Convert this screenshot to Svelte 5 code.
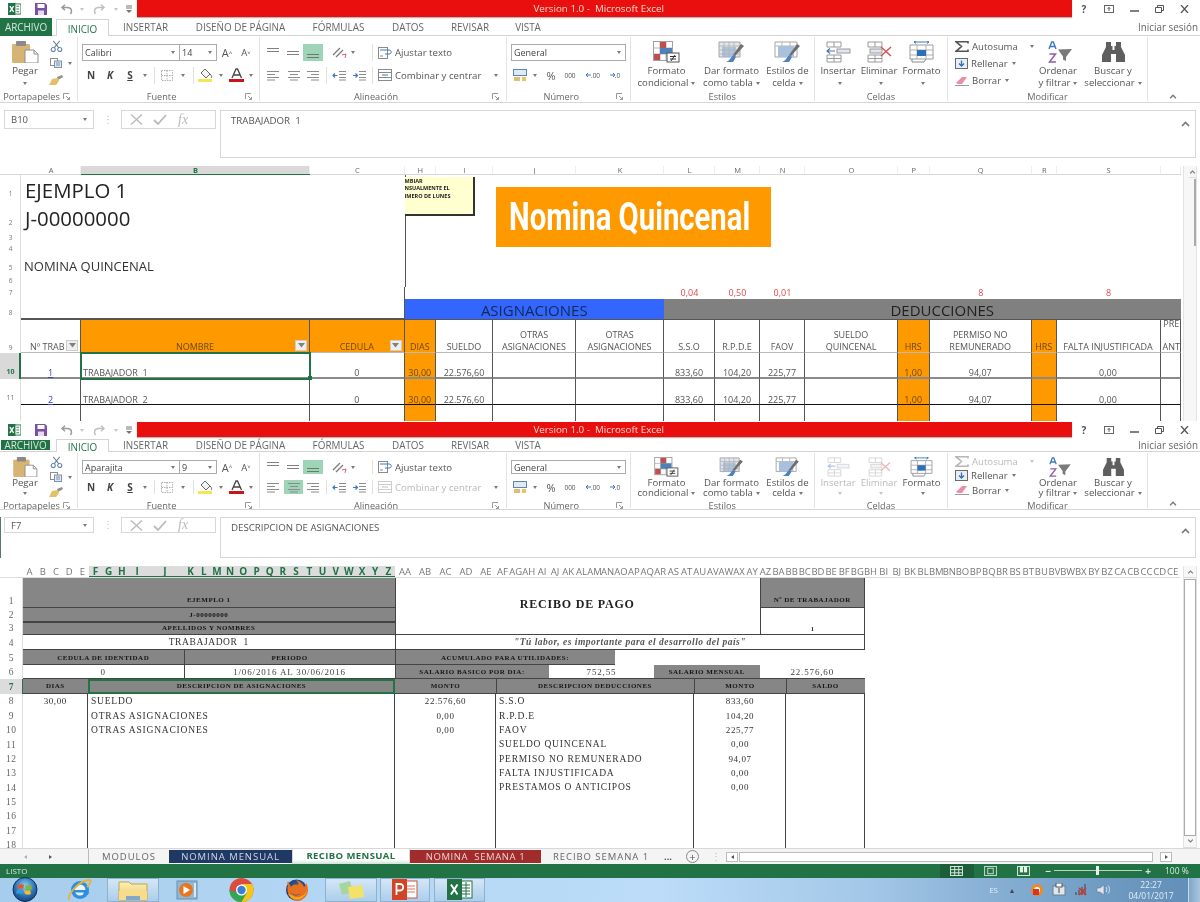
<script>
  const ui = {
    w1: { second: false, font: 'Calibri', size: '14' },
    w2: { second: true, font: 'Aparajita', size: '9' }
  };

  const tabs = [
    ['INSERTAR', 73], ['DISEÑO DE PÁGINA', 117], ['FÓRMULAS', 79],
    ['DATOS', 60], ['REVISAR', 64], ['VISTA', 52]
  ];

  const qat = [
    { w: 28, i: 'xl', iw: 13, ih: 12 }, { w: 26, i: 'save', iw: 12, ih: 12 },
    { w: 24, i: 'undo', iw: 13, ih: 11 }, { w: 8, car: 1, dim: 1 },
    { w: 26, i: 'redo', iw: 13, ih: 11 }, { w: 8, car: 1, dim: 1 },
    { w: 17, i: 'qat', iw: 6, ih: 8 }
  ];

  const fontRow2 = [
    { w: 18, t: 'N', c: 'bold' }, { w: 20, t: 'K', c: 'bold ital' }, { w: 20, t: 'S', c: 'bold und' }, { w: 10, car: 1 },
    { w: 8, sep: 1 }, { w: 18, i: 'border', iw: 12, ih: 11 }, { w: 14, car: 1 }, { w: 6, sep: 1 },
    { w: 20, i: 'bucket', iw: 16, ih: 14 }, { w: 10, car: 1 }, { w: 20, i: 'fcolor', iw: 15, ih: 14 }, { w: 10, car: 1 }
  ];

  const alignRow1 = (r) => [
    { w: 21, i: 'al-top', iw: 14, ih: 12 }, { w: 20, i: 'al-mid', iw: 14, ih: 12 },
    { w: 20, i: 'al-bot', iw: 14, ih: 12, on: 1 }, { w: 6 }, { w: 20, i: 'orient', iw: 15, ih: 13 },
    { w: 8, car: 1 }, { w: 12 }, { w: 6, sep: 1 }, { w: 20, i: 'wrap', iw: 14, ih: 12 },
    { w: 70, t: 'Ajustar texto', c: 'lft' }
  ];
  const alignRow2 = (r) => [
    { w: 22, i: 'al-l', iw: 14, ih: 11 }, { w: 19, i: 'al-c', iw: 14, ih: 11, on: r.second },
    { w: 20, i: 'al-r', iw: 14, ih: 11 }, { w: 6, sep: 1 }, { w: 20, i: 'ind-l', iw: 14, ih: 11 },
    { w: 20, i: 'ind-r', iw: 14, ih: 11 }, { w: 6, sep: 1 }, { w: 20, i: 'merge', iw: 14, ih: 12, dim: r.second },
    { w: 96, t: 'Combinar y centrar', c: 'lft', dim: r.second }, { w: 10, car: 1 }
  ];
  const numRow2 = [
    { w: 18, i: 'money', iw: 14, ih: 12 }, { w: 12, car: 1 }, { w: 20, t: '%', c: 'pct' }, { w: 18, t: '000', c: 'tiny' },
    { w: 4 }, { w: 20, i: 'dec-up', iw: 5, ih: 10, t: '.00', c: 'tiny' }, { w: 2 }, { w: 20, i: 'dec-dn', iw: 5, ih: 10, t: '.0', c: 'tiny' }
  ];

  const styleBtns = [
    { w: 72, i: 'cond', iw: 27, l: ['Formato', 'condicional'], car: 1 },
    { w: 58, i: 'table', iw: 27, l: ['Dar formato', 'como tabla'], car: 1 },
    { w: 54, i: 'cellst', iw: 27, l: ['Estilos de', 'celda'], car: 1 }
  ];
  const cellBtns = (r) => [
    { w: 46, i: 'ins', iw: 25, l: ['Insertar', ''], car: 1, dim: r.second },
    { w: 36, i: 'del', iw: 25, l: ['Eliminar', ''], car: 1, dim: r.second },
    { w: 49, i: 'fmt', iw: 25, l: ['Formato', ''], car: 1 }
  ];
  const sortBtns = [
    { w: 46, i: 'sort', iw: 27, l: ['Ordenar', 'y filtrar'], car: 1 },
    { w: 64, i: 'bino', iw: 25, l: ['Buscar y', 'seleccionar'], car: 1 }
  ];

  // sheet 1
  const cols1 = [
    ['A', 60], ['B', 229], ['C', 94.5], ['H', 31.5], ['I', 57], ['J', 83], ['K', 88], ['L', 51],
    ['M', 45], ['N', 45], ['O', 93], ['P', 31.5], ['Q', 102.5], ['R', 24.5], ['S', 104], ['', 20]
  ];
  const grid1 = '21px ' + cols1.map((c) => c[1] + 'px').join(' ');
  const heads = {
    A: 'Nº TRAB', B: 'NOMBRE', C: 'CEDULA', H: 'DIAS', I: 'SUELDO', J: 'OTRAS\nASIGNACIONES', K: 'OTRAS\nASIGNACIONES',
    L: 'S.S.O', M: 'R.P.D.E', N: 'FAOV', O: 'SUELDO\nQUINCENAL', P: 'HRS', Q: 'PERMISO NO\nREMUNERADO', R: 'HRS', S: 'FALTA INJUSTIFICADA', '': ''
  };
  const orangeHead = 'BCHPR', orangeBody = 'HPR';
  const filtered = 'ABC';
  const body1 = (n) => ({
    A: String(n), B: 'TRABAJADOR  ' + n, C: '0', H: '30,00', I: '22.576,60', L: '833,60', M: '104,20',
    N: '225,77', P: '1,00', Q: '94,07', S: '0,00'
  });
  const rates = { L: '0,04', M: '0,50', N: '0,01', Q: '8', S: '8' };
  const topRows = [[25, 1], [29, 2], [15, 3], [11, 4], [19, 5], [13, 6]];

  // sheet 2
  const letters = 'A B C D E F G H I J K L M N O P Q R S T U V W X Y Z AA AB AC AD AE'.split(' ');
  const hw = { I: 17.5, J: 38, AA: 20, AB: 20, AC: 21, AD: 20, AE: 20 };
  const more = 'AF AG AH AI AJ AK AL AM AN AO AP AQ AR AS AT AU AV AW AX AY AZ BA BB BC BD BE BF BG BH BI BJ BK BL BM BN BO BP BQ BR BS BT BU BV BW BX BY BZ CA CB CC CD CE'.split(' ');
  const cols2 = [
    ...letters.map((l, i) => ({ l, w: hw[l] || 13.2, sel: i >= 5 && i <= 25 })),
    ...more.map((l) => ({ l, w: 13.15, sel: false }))
  ];

  const g = 'hd', v = 'val';
  const cells2 = [
    { r: 1, c: 2, n: 3, t: 'EJEMPLO 1', k: g + ' end' },
    { r: 1, c: 5, n: 6, h: 3, t: 'RECIBO DE PAGO', k: 'title' },
    { r: 1, c: 11, n: 2, t: 'Nº DE TRABAJADOR', k: g + ' end ln' },
    { r: 2, c: 2, n: 3, t: 'J-00000000', k: g },
    { r: 2, c: 11, n: 2, h: 2, t: '1', k: 'one ln' },
    { r: 3, c: 2, n: 3, t: 'APELLIDOS Y NOMBRES', k: g + ' tl' },
    { r: 4, c: 2, n: 3, t: 'TRABAJADOR  1', k: 'name' },
    { r: 4, c: 5, n: 8, t: '"Tú labor, es importante para el desarrollo del país"', k: 'quote' },
    { r: 5, c: 2, n: 2, t: 'CEDULA DE IDENTIDAD', k: g },
    { r: 5, c: 4, n: 1, t: 'PERIODO', k: g + ' ll' },
    { r: 5, c: 5, n: 3, t: 'ACUMULADO PARA UTILIDADES:', k: g + ' ll' },
    { r: 6, c: 2, n: 2, t: '0', k: v },
    { r: 6, c: 4, n: 1, t: '1/06/2016 AL 30/06/2016', k: v + ' ll' },
    { r: 6, c: 5, n: 2, t: 'SALARIO BASICO POR DIA:', k: g + ' ll' },
    { r: 6, c: 7, n: 2, t: '752,55', k: v },
    { r: 6, c: 9, n: 2, t: 'SALARIO MENSUAL', k: g },
    { r: 6, c: 11, n: 2, t: '22.576,60', k: v },
    { r: 7, c: 2, n: 1, t: 'DIAS', k: g },
    { r: 7, c: 3, n: 2, t: 'DESCRIPCION DE ASIGNACIONES', k: g + ' picked' },
    { r: 7, c: 5, n: 1, t: 'MONTO', k: g },
    { r: 7, c: 6, n: 4, t: 'DESCRIPCION DEDUCCIONES', k: g + ' ll' },
    { r: 7, c: 10, n: 2, t: 'MONTO', k: g + ' ll' },
    { r: 7, c: 12, n: 1, t: 'SALDO', k: g + ' ll' }
  ];
  const lines2 = [
    ['30,00', 'SUELDO', '22.576,60', 'S.S.O', '833,60'],
    ['', 'OTRAS ASIGNACIONES', '0,00', 'R.P.D.E', '104,20'],
    ['', 'OTRAS ASIGNACIONES', '0,00', 'FAOV', '225,77'],
    ['', '', '', 'SUELDO QUINCENAL', '0,00'],
    ['', '', '', 'PERMISO NO REMUNERADO', '94,07'],
    ['', '', '', 'FALTA INJUSTIFICADA', '0,00'],
    ['', '', '', 'PRESTAMOS O ANTICIPOS', '0,00'],
    ['', '', '', '', ''], ['', '', '', '', ''], ['', '', '', '', ''], ['', '', '', '', '']
  ];
  const rowLabels2 = Array.from({ length: 18 }, (_, i) => i + 1);

  const sheetTabs = [
    { t: 'MODULOS', w: 80, k: 'plain' }, { t: 'NOMINA MENSUAL', w: 123, k: 'navy' },
    { t: 'RECIBO MENSUAL', w: 118, k: 'active' }, { t: 'NOMINA  SEMANA 1', w: 131, k: 'red' },
    { t: 'RECIBO SEMANA 1', w: 120, k: 'plain' }
  ];

  const taskApps = [
    { w: 42, gap: 21, i: 'orb', iw: 30, ih: 25 }, { w: 25, gap: 15, i: 'ie', iw: 25, ih: 24 },
    { w: 52, gap: 17, i: 'folder', iw: 30, ih: 22, b: 1 }, { w: 23, gap: 30, i: 'media', iw: 23, ih: 20 },
    { w: 25, gap: 30, i: 'chrome', iw: 25, ih: 24 }, { w: 25, gap: 16, i: 'fox', iw: 25, ih: 24 },
    { w: 52, gap: 3, i: 'sticky', iw: 28, ih: 20, b: 1 }, { w: 50, gap: 4, i: 'ppt', iw: 26, ih: 21, b: 1 },
    { w: 51, gap: 0, i: 'xlbig', iw: 26, ih: 21, b: 1 }
  ];
</script>

{#snippet ic(name, w, h)}
  <svg class="ic" width={w} height={h}><use href="#{name}" /></svg>
{/snippet}

{#snippet tools(items)}
  {#each items as t}
    <span class="slot" class:on={t.on} class:dim={t.dim} style:width="{t.w}px">
      {#if t.i}{@render ic(t.i, t.iw, t.ih)}{/if}
      {#if t.car}<i class="caret"></i>{/if}
      {#if t.sep}<i class="vsep"></i>{/if}
      {#if t.t}<span class={t.c}>{t.t}</span>{/if}
    </span>
  {/each}
{/snippet}

{#snippet big(items)}
  {#each items as b}
    <div class="big" class:dim={b.dim} style:width="{b.w}px">
      <div class="bigic">{@render ic(b.i, b.iw, 22)}</div>
      <div class="bl">{b.l[0]}</div>
      <div class="bl">{b.l[1]}{#if b.car}<i class="caret sp"></i>{/if}</div>
    </div>
  {/each}
{/snippet}

{#snippet label(t, launch)}
  <div class="glabel">
    <span>{t}</span>
    {#if launch}<span class="launch">{@render ic('launch', 7, 7)}</span>{/if}
  </div>
{/snippet}

{#snippet chrome(r)}
  <div class="titlebar">
    <div class="qat">{@render tools(qat)}</div>
    <div class="redbar"><span>Version 1.0 -  Microsoft Excel</span></div>
    <div class="winbtns">
      <span>?</span>
      <span>{@render ic('w-help', 10, 8)}</span>
      <span>{@render ic('w-min', 9, 8)}</span>
      <span>{@render ic('w-max', 9, 8)}</span>
      <span>{@render ic('w-x', 9, 8)}</span>
    </div>
  </div>
  <div class="tabrow">
    <div class="filetab"><span>ARCHIVO</span></div>
    <div class="hometab">INICIO</div>
    {#each tabs as t}
      <div class="tab" style:width="{t[1]}px">{t[0]}</div>
    {/each}
    <div class="signin">Iniciar sesión</div>
  </div>
  <div class="ribbon">
    <div class="group" style:width="78px">
      <div class="gbody clip">
        <div class="big paste">
          <div class="bigic">{@render ic('paste', 27, 22)}</div>
          <div class="bl">Pegar</div>
          <div class="bl"><i class="caret"></i></div>
        </div>
        <div class="stack">
          <span class="slot s16">{@render ic('cut', 13, 12)}</span>
          <span class="slot s16">{@render ic('copy', 12, 10)}<i class="caret out"></i></span>
          <span class="slot s16">{@render ic('brush', 14, 10)}</span>
        </div>
      </div>
      {@render label('Portapapeles', true)}
    </div>

    <div class="group" style:width="182px">
      <div class="gbody rows pad4">
        <div class="line">
          <span class="select fname">{r.font}<i class="caret"></i></span>
          <span class="select fsize">{r.size}<i class="caret"></i></span>
          <span class="slot fgrow" >A<sup>˄</sup></span>
          <span class="slot fshrink">A<sup>˅</sup></span>
        </div>
        <div class="line">{@render tools(fontRow2)}</div>
      </div>
      {@render label('Fuente', true)}
    </div>

    <div class="group" style:width="247px">
      <div class="gbody rows pad2">
        <div class="line">{@render tools(alignRow1(r))}</div>
        <div class="line">{@render tools(alignRow2(r))}</div>
      </div>
      {@render label('Alineación', true)}
    </div>

    <div class="group" style:width="123.5px">
      <div class="gbody rows pad4">
        <div class="line"><span class="select fnum">General<i class="caret"></i></span></div>
        <div class="line">{@render tools(numRow2)}</div>
      </div>
      {@render label('Número', true)}
    </div>

    <div class="group" style:width="184.5px">
      <div class="gbody">{@render big(styleBtns)}</div>
      {@render label('Estilos', false)}
    </div>

    <div class="group" style:width="133px">
      <div class="gbody">{@render big(cellBtns(r))}</div>
      {@render label('Celdas', false)}
    </div>

    <div class="group" style:width="200px">
      <div class="gbody">
        <div class="mod">
          <div class="modrow" class:dim={r.second}>{@render ic('sigma', 14, 11)}<span>Autosuma</span><i class="caret far"></i></div>
          <div class="modrow">{@render ic('filld', 13, 11)}<span>Rellenar</span><i class="caret"></i></div>
          <div class="modrow">{@render ic('eraser', 14, 10)}<span>Borrar</span><i class="caret"></i></div>
        </div>
        {@render big(sortBtns)}
      </div>
      {@render label('Modificar', false)}
    </div>
    <div class="collapse">{@render ic('up', 8, 5)}</div>
  </div>
{/snippet}

{#snippet formula(name, text)}
  <div class="fbar">
    <div class="namebox"><span>{name}</span><i class="caret"></i></div>
    <div class="dots">⋮</div>
    <div class="fxbox">
      {@render ic('f-x', 13, 11)}
      {@render ic('f-ok', 14, 11)}
      <em>fx</em>
    </div>
    <div class="input"><span>{text}</span>{@render ic('up', 9, 6)}</div>
  </div>
{/snippet}

<svg class="defs" aria-hidden="true">
  <defs>
    <radialGradient id="orbg" cx=".5" cy=".35" r=".7"><stop offset="0" stop-color="#8fd0f5" /><stop offset=".6" stop-color="#2a6fb3" /><stop offset="1" stop-color="#123a6b" /></radialGradient>
    <linearGradient id="foldg" x1="0" y1="0" x2="0" y2="1"><stop offset="0" stop-color="#fdf1b4" /><stop offset="1" stop-color="#e8c667" /></linearGradient>
    <radialGradient id="foxg" cx=".55" cy=".45" r=".6"><stop offset="0" stop-color="#3d6fb5" /><stop offset=".55" stop-color="#28508f" /><stop offset="1" stop-color="#1b3566" /></radialGradient>
  </defs>
  <symbol id="xl" viewBox="0 0 14 13"><rect x="6" y="1" width="8" height="11" fill="#fff" stroke="#217346" /><path d="M9 3.500h3M9 6.500h3M9 9.500h3" stroke="#217346" /><rect x="0" y="0" width="8" height="13" fill="#217346" /><path d="M2 3.500l4 6M6 3.500l-4 6" stroke="#fff" stroke-width="1.400" /></symbol>
  <symbol id="save" viewBox="0 0 12 12"><path d="M0 0h10l2 2v10H0z" fill="#7b4fa3" /><rect x="2.500" y="1" width="7" height="4" fill="#fff" /><rect x="3" y="7.500" width="6" height="4.500" fill="#e6dcef" /></symbol>
  <symbol id="undo" viewBox="0 0 13 11"><path d="M10.500 10c2-3 1-6.500-3-6.500H2M5 .8L2 3.500l3 2.700" fill="none" stroke="#9a9a9a" stroke-width="1.500" /></symbol>
  <symbol id="redo" viewBox="0 0 13 11"><path d="M2.500 10c-2-3-1-6.500 3-6.500H11M8 .8l3 2.700-3 2.700" fill="none" stroke="#c0c0c0" stroke-width="1.500" /></symbol>
  <symbol id="qat" viewBox="0 0 6 8"><path d="M0 1h6M0 3h6" stroke="#777" /><path d="M0 5h6L3 8z" fill="#777" /></symbol>
  <symbol id="paste" viewBox="0 0 27 22"><rect x="0" y="3" width="18" height="19" rx="1" fill="#d7b374" /><rect x="4" y="0" width="10" height="5" rx="1" fill="#8a8a8a" /><path d="M13 9h9l4 4v9H13z" fill="#fff" stroke="#8f8f8f" /><path d="M22 9v4h4" fill="none" stroke="#8f8f8f" /></symbol>
  <symbol id="cut" viewBox="0 0 13 13"><path d="M3 1l6 7.500M10 1L4 8.500" stroke="#6f7f8f" stroke-width="1.100" /><circle cx="3" cy="10.300" r="2.200" fill="none" stroke="#5f86b0" stroke-width="1.200" /><circle cx="10" cy="10.300" r="2.200" fill="none" stroke="#5f86b0" stroke-width="1.200" /></symbol>
  <symbol id="copy" viewBox="0 0 12 10"><rect x=".5" y=".5" width="7" height="7" fill="#fff" stroke="#8d8d8d" /><rect x="4.500" y="3" width="7" height="6.500" fill="#dbe7f3" stroke="#7f93a8" /><path d="M6 5h4M6 7h4" stroke="#7f93a8" /></symbol>
  <symbol id="brush" viewBox="0 0 14 10"><path d="M8 2l5-2 1 2-5 3z" fill="#8d8d8d" /><path d="M3 4l6-1 1 3-3 4H0z" fill="#e2c068" /></symbol>
  <symbol id="border" viewBox="0 0 12 11"><rect x=".5" y=".5" width="11" height="10" fill="none" stroke="#b0b0b0" stroke-dasharray="1.500 1" /><path d="M6 .5v10M.5 5.500h11" stroke="#b0b0b0" stroke-dasharray="1.500 1" /></symbol>
  <symbol id="bucket" viewBox="0 0 16 14"><path d="M7 1l5 5-4 4-5-5z" fill="#f3f3f3" stroke="#666" /><path d="M12 6c2 2 2 3 1 4" fill="none" stroke="#666" /><rect x="0" y="11" width="14" height="3" fill="#f5e653" /></symbol>
  <symbol id="fcolor" viewBox="0 0 15 14"><path d="M3 10L7 1h1.500l4 9M4.700 7h6" fill="none" stroke="#444" stroke-width="1.300" /><rect x="0" y="11" width="15" height="3" fill="#c8151b" /></symbol>
  <symbol id="al-top" viewBox="0 0 14 12"><path d="M1 1.500h12M1 4.500h12" stroke="#808080" /></symbol>
  <symbol id="al-mid" viewBox="0 0 14 12"><path d="M1 4.500h12M1 7.500h12" stroke="#808080" /></symbol>
  <symbol id="al-bot" viewBox="0 0 14 12"><path d="M1 7.500h12M1 10.500h12" stroke="#6a7a70" /></symbol>
  <symbol id="al-l" viewBox="0 0 14 11"><path d="M1 1.500h12M1 4.500h8M1 7.500h12M1 10h8" stroke="#8c8c8c" /></symbol>
  <symbol id="al-c" viewBox="0 0 14 11"><path d="M1 1.500h12M3 4.500h8M1 7.500h12M3 10h8" stroke="#8c8c8c" /></symbol>
  <symbol id="al-r" viewBox="0 0 14 11"><path d="M1 1.500h12M5 4.500h8M1 7.500h12M5 10h8" stroke="#8c8c8c" /></symbol>
  <symbol id="ind-l" viewBox="0 0 14 11"><path d="M7 1.500h7M7 4.500h7M7 7.500h7M7 10h7" stroke="#8c8c8c" /><path d="M5.500 5.500H1M3 3.500l-2 2 2 2" fill="none" stroke="#3c78c0" stroke-width="1.200" /></symbol>
  <symbol id="ind-r" viewBox="0 0 14 11"><path d="M7 1.500h7M7 4.500h7M7 7.500h7M7 10h7" stroke="#8c8c8c" /><path d="M1 5.500h4.500M3.500 3.500l2 2-2 2" fill="none" stroke="#3c78c0" stroke-width="1.200" /></symbol>
  <symbol id="orient" viewBox="0 0 15 13"><path d="M1 9l7-7M4 11l7-7" stroke="#7a7a7a" stroke-width="1.300" /><path d="M10 9l4-1-1 4" fill="none" stroke="#c86a78" /></symbol>
  <symbol id="wrap" viewBox="0 0 14 12"><rect x=".5" y=".5" width="9" height="11" fill="#fff" stroke="#8a8a8a" /><path d="M2 3h9c3 0 3 4 0 4H7" fill="none" stroke="#3c78c0" /><path d="M2 9h3" stroke="#8a8a8a" /></symbol>
  <symbol id="merge" viewBox="0 0 14 12"><rect x=".5" y=".5" width="13" height="11" fill="#fff" stroke="#8a8a8a" /><path d="M.5 3.500h13M.5 8.500h13" stroke="#8a8a8a" /><path d="M4 6h6" stroke="#3c78c0" /></symbol>
  <symbol id="money" viewBox="0 0 14 12"><rect x=".5" y=".5" width="13" height="6" fill="#dfeaf5" stroke="#5f86b0" /><path d="M1 9h6M1 11h6" stroke="#d7a94b" stroke-width="1.500" /><path d="M9 8h4v4H9z" fill="#e8c75f" /></symbol>
  <symbol id="dec-up" viewBox="0 0 5 10"><path d="M5 5H0M2 3L0 5l2 2" fill="none" stroke="#3c78c0" /></symbol>
  <symbol id="dec-dn" viewBox="0 0 5 10"><path d="M0 5h5M3 3l2 2-2 2" fill="none" stroke="#3c78c0" /></symbol>
  <symbol id="cond" viewBox="0 0 27 22"><rect x=".5" y=".5" width="19" height="19" fill="#fff" stroke="#a0a0a0" /><path d="M7 .5v19M13 .5v19M.5 7h19M.5 13h19" stroke="#b5b5b5" /><rect x="7" y="1" width="6" height="6" fill="#c0504d" /><rect x="7" y="7" width="12" height="6" fill="#4f81bd" /><rect x="1" y="13" width="6" height="6" fill="#c0504d" /><rect x="14" y="12" width="12" height="9" fill="#fff" stroke="#555" /><path d="M17 15.500h6M17 18h6M22 14l-4 6" stroke="#333" fill="none" /></symbol>
  <symbol id="table" viewBox="0 0 27 22"><path d="M1 1h21v15H1z" fill="#dfe7f0" stroke="#a5a5a5" /><path d="M1 5h21M1 9h21M1 13h21M6 1v15M11 1v15M16 1v15" stroke="#b7b7b7" /><path d="M4 6h14v10H4z" fill="#9fb3cc" opacity=".7" /><path d="M26 5L17 15l-2-1 8-11z" fill="#6e6e6e" /><path d="M15 14l3 2-3 5H8c3-1 5-4 7-7z" fill="#4f81bd" /></symbol>
  <symbol id="cellst" viewBox="0 0 27 22"><path d="M1 1h22v15H1z" fill="#fff" stroke="#a5a5a5" /><path d="M1 5h22M8 1v15M16 1v15" stroke="#b7b7b7" /><path d="M4 5h16v11H4z" fill="#a9c1de" /><path d="M26 5L17 15l-2-1 8-11z" fill="#6e6e6e" /><path d="M15 14l3 2-3 5H8c3-1 5-4 7-7z" fill="#4f81bd" /></symbol>
  <symbol id="ins" viewBox="0 0 25 22"><path d="M1 1h14v5H1zM8 1v5M1 14h14v7H1zM8 14v7M1 17.500h14" fill="#fff" stroke="#9a9a9a" /><path d="M9 10H1M4 7.500L1 10l3 2.500" fill="none" stroke="#3c78c0" stroke-width="1.200" /><rect x="11" y="8" width="13" height="4" fill="#dfe7f0" stroke="#9a9a9a" /></symbol>
  <symbol id="del" viewBox="0 0 25 22"><path d="M1 1h14v5H1zM8 1v5M1 14h14v7H1zM8 14v7M1 17.500h14" fill="#fff" stroke="#9a9a9a" /><rect x="3" y="8" width="12" height="4" fill="#dfe7f0" stroke="#9a9a9a" /><path d="M14 6l10 9M24 6L14 15" stroke="#d9534f" stroke-width="1.500" /></symbol>
  <symbol id="fmt" viewBox="0 0 25 22"><path d="M1 4h23v14H1z" fill="#fff" stroke="#9a9a9a" /><path d="M8 4v14M17 4v14M1 9h23M1 14h23" stroke="#b0b0b0" /><rect x="8" y="9" width="9" height="6" fill="#2f6fb5" /><path d="M5 1h15M5 1l2-1M5 1l2 1.500M20 1l-2-1M20 1l-2 1.500" stroke="#3c78c0" fill="none" /><path d="M3 18v3h12l2-3" fill="none" stroke="#888" /></symbol>
  <symbol id="sigma" viewBox="0 0 14 11"><path d="M13 2.500V.7H1l5.500 4.800L1 10.300h12V8.500" fill="none" stroke="#555" stroke-width="1.600" /></symbol>
  <symbol id="filld" viewBox="0 0 13 11"><rect x=".5" y=".5" width="12" height="10" fill="#e9eef5" stroke="#6a6a6a" /><path d="M6.500 2.500v5M4 5.500l2.500 2.500L9 5.500" fill="none" stroke="#2f6fb5" stroke-width="1.300" /></symbol>
  <symbol id="eraser" viewBox="0 0 14 10"><path d="M1 7l6-6h5L7 8H3z" fill="#e88fa4" /><path d="M0 9.500h14" stroke="#999" /></symbol>
  <symbol id="sort" viewBox="0 0 27 22"><path d="M13 8.500l14-.5-6 8v4l-3-1.500v-3z" fill="#7a7a7a" /><path d="M4 8l2.700-7h1.600L11 8M5.200 5.500H10" fill="none" stroke="#3c78c0" stroke-width="1.400" /><path d="M4.500 13h6l-6 8h6.500" fill="none" stroke="#8e5fa8" stroke-width="1.500" /></symbol>
  <symbol id="bino" viewBox="0 0 25 22"><path d="M5 1h5v4h1.500v4h2V5H15V1h5v5l2 4 2 4v7h-9v-8h-5v8H1v-7l2-4 2-4z" fill="#5e5e5e" /></symbol>
  <symbol id="launch" viewBox="0 0 7 7"><path d="M.5 6V.5H6M3 3l3.500 3.500M4 6.500h2.500V4" fill="none" stroke="#999" /></symbol>
  <symbol id="up" viewBox="0 0 9 6"><path d="M1 5l3.500-3.500L8 5" fill="none" stroke="#777" stroke-width="1.600" /></symbol>
  <symbol id="w-help" viewBox="0 0 10 8"><rect x=".5" y=".5" width="9" height="7" fill="none" stroke="#666" /><path d="M5 2v4M3.500 4L5 2.500 6.500 4" fill="none" stroke="#666" /></symbol>
  <symbol id="w-min" viewBox="0 0 9 8"><path d="M0 6h9" stroke="#555" stroke-width="1.500" /></symbol>
  <symbol id="w-max" viewBox="0 0 9 8"><path d="M.5 2.500h6v5h-6zM2.500 2.500v-2h6v5H6.500" fill="none" stroke="#555" /></symbol>
  <symbol id="w-x" viewBox="0 0 9 8"><path d="M1 0l7 8M8 0L1 8" stroke="#555" stroke-width="1.300" /></symbol>
  <symbol id="f-x" viewBox="0 0 13 11"><path d="M1 .5l11 10M12 .5l-11 10" stroke="#bbb" stroke-width="1.400" /></symbol>
  <symbol id="f-ok" viewBox="0 0 14 11"><path d="M1 6l4 4 8-9" fill="none" stroke="#bbb" stroke-width="1.800" /></symbol>
  <symbol id="funnel" viewBox="0 0 7 5"><path d="M0 0h7L3.500 4.500z" fill="#808080" /></symbol>
  <symbol id="orb" viewBox="0 0 30 25"><circle cx="15" cy="12.500" r="12" fill="url(#orbg)" stroke="#0f3059" /><path d="M8 8c2-1 4-1 6 0l-1 4c-2-1-4-1-6 0z" fill="#e8562a" /><path d="M15 8c2 1 4 1 6 0l1 4c-2 1-4 1-6 0z" fill="#7fba2c" /><path d="M7 13c2-1 4-1 6 0l-1 4c-2-1-4-1-6 0z" fill="#2e9fdc" /><path d="M14 13c2 1 4 1 6 0l1 4c-2 1-4 1-6 0z" fill="#f4bd2a" /></symbol>
  <symbol id="ie" viewBox="0 0 25 24"><circle cx="13" cy="12" r="9" fill="#2f8fdc" /><circle cx="13" cy="12" r="5.500" fill="#e9f4fb" /><path d="M6 12h14v2.500H6z" fill="#2f8fdc" /><path d="M17 14l5 0-1 3h-5z" fill="#2f8fdc" /><path d="M2 22C0 17 12 2 23 2c2 1-1 5-3 7" fill="none" stroke="#e7b23c" stroke-width="1.800" /></symbol>
  <symbol id="folder" viewBox="0 0 30 22"><path d="M1 3h10l2 2h16v16H1z" fill="url(#foldg)" stroke="#c4a24e" /><path d="M1 12h28v9H1z" fill="#f6dc8b" /><path d="M8 17h14v4H8z" fill="#7fa8c9" /></symbol>
  <symbol id="media" viewBox="0 0 23 20"><rect x="1" y="1" width="20" height="18" fill="#8fb7d6" stroke="#6b8fae" /><circle cx="10" cy="10" r="7" fill="#e8761f" /><path d="M7.500 6l6.500 4-6.500 4z" fill="#fff" /><rect x="18" y="3" width="2" height="14" fill="#dceaf5" /></symbol>
  <symbol id="chrome" viewBox="0 0 25 24"><circle cx="12.500" cy="12" r="12" fill="#dd4b3e" /><path d="M12.500 24a12 12 0 0 0 10.400-18H12.500z" fill="#f5c518" /><path d="M.5 12A12 12 0 0 0 12.500 24l5.500-9.500H8z" fill="#2fa84f" /><circle cx="12.500" cy="12" r="5.500" fill="#fff" /><circle cx="12.500" cy="12" r="4.200" fill="#3b7fd9" /></symbol>
  <symbol id="fox" viewBox="0 0 25 24"><circle cx="12.500" cy="12" r="10.500" fill="url(#foxg)" /><path d="M4 3c-1 2-1 3 0 4C2 13 5 22 13 23c6 0 11-5 11-11 0-3-1-6-2-7 0 2-1 3-2 4-1-3-4-6-8-7 2 2 3 4 2 5-3-1-6 0-7 2z M6 13c2 4 7 5 11 2-3 4-9 3-11-2z" fill="#e8711f" /><path d="M4 16c3 5 9 7 14 4 3-2 5-5 5-8-2 6-9 9-14 6-2-1-4-2-5-2z" fill="#f5a623" /></symbol>
  <symbol id="sticky" viewBox="0 0 28 20"><path d="M2 4l11-3 3 11-11 3z" fill="#a6d5a0" /><path d="M11 7l14-2 2 12-14 2z" fill="#f4e266" /></symbol>
  <symbol id="ppt" viewBox="0 0 26 21"><rect x="12" y="2" width="13" height="17" fill="#fff" stroke="#c8553a" /><path d="M15 7h8M15 10h8M15 13h8" stroke="#d9765f" /><rect x="0" y="0" width="15" height="21" fill="#d14424" /><path d="M4.500 16V5H8a3 3 0 0 1 0 6.500H4.500" fill="none" stroke="#fff" stroke-width="1.800" /></symbol>
  <symbol id="xlbig" viewBox="0 0 26 21"><rect x="12" y="2" width="13" height="17" fill="#fff" stroke="#217346" /><path d="M15 6h8M15 9h8M15 12h8M15 15h8M19 3v15" stroke="#217346" /><rect x="0" y="0" width="15" height="21" fill="#217346" /><path d="M4 5.500l6.500 10M10.500 5.500L4 15.500" stroke="#fff" stroke-width="2" /></symbol>
  <symbol id="v-norm" viewBox="0 0 14 11"><rect x=".5" y=".5" width="13" height="10" fill="none" stroke="#e8f2ec" /><path d="M5 .5v10M9.500 .5v10M.5 4h13M.5 7.500h13" stroke="#e8f2ec" /></symbol>
  <symbol id="v-page" viewBox="0 0 14 11"><rect x=".5" y=".5" width="13" height="10" fill="none" stroke="#cfe2d7" /><rect x="4" y="2.500" width="6" height="6" fill="none" stroke="#cfe2d7" /></symbol>
  <symbol id="v-brk" viewBox="0 0 14 11"><rect x=".5" y=".5" width="13" height="10" fill="none" stroke="#e8f2ec" /><rect x="3" y="0" width="3.500" height="7" fill="#e8f2ec" /><rect x="7.500" y="0" width="3.500" height="7" fill="#e8f2ec" /></symbol>
  <symbol id="tr-a" viewBox="0 0 14 13"><circle cx="7" cy="7" r="6" fill="#ef8a1d" /><circle cx="7" cy="7" r="3" fill="#fff" /><rect x="3" y="6" width="6" height="6" fill="#d8332a" /></symbol>
  <symbol id="tr-b" viewBox="0 0 14 13"><rect x="1" y="3" width="12" height="9" fill="#dfe7ef" stroke="#6e7f8f" /><rect x="4" y="0" width="6" height="4" fill="#fff" stroke="#555" /><path d="M7 5v5" stroke="#445" /></symbol>
  <symbol id="tr-c" viewBox="0 0 14 13"><path d="M1 12h2V9H1zM4 12h2V7H4zM7 12h2V4H7zM10 12h2V1h-2z" fill="#5f6f7f" /><path d="M5 5l7 7M12 5l-7 7" stroke="#d8332a" stroke-width="1.600" /></symbol>
  <symbol id="tr-d" viewBox="0 0 14 13"><path d="M1 5h3l4-3v10L4 9H1z" fill="#dde5ee" stroke="#6b7b8b" stroke-width=".6" /><path d="M10 4c1 1 1 4 0 5M12 2.500c2 2 2 6 0 8" fill="none" stroke="#dde5ee" /></symbol>
</svg>

<div class="page">
  <section class="win w1">
    {@render chrome(ui.w1)}
    {@render formula('B10', 'TRABAJADOR  1')}

    <div class="sheetwrap">
      <div class="s1" style:grid-template-columns={grid1}>
        <div class="corner"></div>
        {#each cols1 as c}
          <div class="ch" class:sel={c[0] === 'B'}>{c[0]}</div>
        {/each}

        {#each topRows as tr}
          <div class="rh" style:grid-row={tr[1] + 1}>{tr[1]}</div>
        {/each}
        <div class="big1 a1">EJEMPLO 1</div>
        <div class="big1 a2">J-00000000</div>
        <div class="a3"></div>
        <div class="a4"></div>
        <div class="nq">NOMINA QUINCENAL</div>
        <div class="a6"></div>
        <div class="canvas">
          <div class="note"><p>MBIAR</p><p>NSUALMENTE EL</p><p>IMERO DE LUNES</p></div>
          <div class="banner"><span>Nomina Quincenal</span></div>
        </div>

        <div class="rh r7">7</div>
        {#each cols1 as c}
          <div class="rate" class:free={c[0] === 'C'}>{rates[c[0]] || ''}</div>
        {/each}

        <div class="rh r8">8</div>
        <div class="blank8"></div>
        <div class="asig">ASIGNACIONES</div>
        <div class="dedu">DEDUCCIONES</div>

        <div class="rh r9">9</div>
        {#each cols1 as c}
          <div class="hc" class:orange={orangeHead.includes(c[0]) && c[0]} class:wide={c[0] === 'A'}>
            {#if c[0]}
              <span class="pre">{heads[c[0]]}</span>
            {:else}
              <span class="pre cutoff">PRE{'\n\n'}ANT</span>
            {/if}
            {#if c[0] && filtered.includes(c[0])}
              <span class="fbtn">{@render ic('funnel', 7, 5)}</span>
            {/if}
          </div>
        {/each}

        {#each [1, 2, 3] as n}
          <div class="rh rn" class:active={n === 1}>{n + 9}</div>
          {#each cols1 as c}
            <div
              class="bc"
              class:orange={orangeBody.includes(c[0]) && c[0]}
              class:left={c[0] === 'B'}
              class:link={c[0] === 'A'}
              class:black={n > 1}
              class:picked={n === 1 && c[0] === 'B'}
            >
              <span class="pre">{body1(n)[c[0]] || ''}</span>
            </div>
          {/each}
        {/each}
      </div>
      <div class="vscroll one">
        <div class="varrow">{@render ic('up', 7, 4)}</div>
        <div class="vthumb"></div>
      </div>
    </div>
  </section>

  <section class="win w2">
    {@render chrome(ui.w2)}
    {@render formula('F7', 'DESCRIPCION DE ASIGNACIONES')}

    <div class="sheetwrap two">
      <div class="col2">
        <div class="headrow">
          <div class="corner2"></div>
          {#each cols2 as c}
            <div class="ch2" class:sel={c.sel} style:width="{c.w}px">{c.l}</div>
          {/each}
        </div>
        <div class="s2">
          {#each rowLabels2 as n}
            <div class="rh2" class:active={n === 7} style:grid-row={n}>{n}</div>
          {/each}

          {#each cells2 as x}
            <div
              class="cell {x.k}"
              style:grid-row="{x.r} / span {x.h || 1}"
              style:grid-column="{x.c} / span {x.n}"
            >
              {x.t}
            </div>
          {/each}

          {#each lines2 as l, i}
            <div class="cell v8 vl" style:grid-row={i + 8} style:grid-column="2">{l[0]}</div>
            <div class="cell t8 vl" style:grid-row={i + 8} style:grid-column="3 / span 2">{l[1]}</div>
            <div class="cell v8 vl" style:grid-row={i + 8} style:grid-column="5">{l[2]}</div>
            <div class="cell t8 vl" style:grid-row={i + 8} style:grid-column="6 / span 4">{l[3]}</div>
            <div class="cell v8 vl" style:grid-row={i + 8} style:grid-column="10 / span 2">{l[4]}</div>
            <div class="cell vl" style:grid-row={i + 8} style:grid-column="12"></div>
          {/each}
        </div>
      </div>
      <div class="vscroll">
        <div class="varrow">{@render ic('up', 7, 4)}</div>
        <div class="vthumb long"></div>
        <div class="varrow flip">{@render ic('up', 7, 4)}</div>
      </div>
    </div>

    <div class="sheettabs">
      <div class="nav"><i class="tri l dim"></i><i class="tri r"></i></div>
      {#each sheetTabs as t}
        <div class="stab {t.k}" style:width="{t.w}px">{t.t}</div>
      {/each}
      <div class="more">...</div>
      <div class="plus">+</div>
      <div class="vdots">⋮</div>
      <div class="hscroll">
        <span class="harrow"><i class="tri l"></i></span>
        <span class="htrack"></span>
        <span class="harrow"><i class="tri r"></i></span>
      </div>
    </div>
  </section>

  <footer class="status">
    <span class="listo">LISTO</span>
    <div class="views">
      <span class="view cur">{@render ic('v-norm', 13, 10)}</span>
      <span class="view">{@render ic('v-page', 13, 10)}</span>
      <span class="view">{@render ic('v-brk', 13, 10)}</span>
    </div>
    <div class="zoomctl">
      <b>−</b>
      <div class="ztrack"><i></i></div>
      <b>+</b>
    </div>
    <span class="pct100">100 %</span>
  </footer>

  <div class="taskbar">
    <div class="apps">
      {#each taskApps as a}
        <span class="app" class:btn={a.b} style:width="{a.w}px" style:margin-right="{a.gap}px">
          {@render ic(a.i, a.iw, a.ih)}
        </span>
      {/each}
    </div>
    <div class="tray">
      <span class="lang">ES</span>
      <span class="traycar">▴</span>
      {@render ic('tr-a', 14, 13)}
      {@render ic('tr-b', 14, 13)}
      {@render ic('tr-c', 14, 13)}
      {@render ic('tr-d', 14, 13)}
      <span class="clock"><span>22:27</span><span>04/01/2017</span></span>
      <span class="desk"></span>
    </div>
  </div>
</div>

<style>
  :global(body) {
    margin: 0;
    background: #fff;
  }
  .defs {
    position: absolute;
    width: 0;
    height: 0;
  }
  .page {
    width: 1200px;
    height: 902px;
    overflow: hidden;
    display: flex;
    flex-direction: column;
    background: #fff;
    color: #555;
    font-family: 'Open Sans', 'Liberation Sans', sans-serif;
    font-size: 9.6px;
    filter: blur(0.55px);
  }
  .ic {
    display: block;
    flex: none;
  }
  .win {
    overflow: hidden;
    display: flex;
    flex-direction: column;
    flex: none;
  }
  .w1 {
    height: 421px;
    --titleh: 18px;
    --redh: 17px;
    --tabh: 18px;
    --fileh: 18px;
    --rib: 67px;
    --bodyh: 53px;
    --labh: 14px;
    --rowh: 17px;
    --rowgap: 5.5px;
    --lh: 12px;
    --icgap: 2px;
    --iconh: 22px;
    --stackgap: 5px;
    --fh: 48px;
    --modh: 17px;
    --stacktop: 3px;
  }
  .w2 {
    height: 443px;
    --titleh: 17px;
    --redh: 15px;
    --tabh: 14px;
    --fileh: 10px;
    --rib: 58px;
    --bodyh: 46px;
    --labh: 12px;
    --rowh: 14px;
    --rowgap: 6px;
    --lh: 10px;
    --icgap: 1px;
    --iconh: 20px;
    --stackgap: 3px;
    --fh: 41px;
    --modh: 14.5px;
    --stacktop: 3px;
  }

  /* title */
  .titlebar {
    height: var(--titleh);
    display: flex;
    flex: none;
    background: #fff;
  }
  .w2 .titlebar {
    padding-top: 1px;
    box-sizing: border-box;
  }
  .qat {
    width: 137px;
    display: flex;
    align-items: center;
    flex: none;
  }
  .redbar {
    width: 934.5px;
    height: var(--redh);
    background: #ea0f0f;
    box-shadow: 0 1px 1px #b8b8b8;
    color: #f8d8c8;
    text-align: center;
    line-height: var(--redh);
    padding-right: 11px;
    box-sizing: border-box;
    font-size: 9.8px;
    white-space: pre;
    flex: none;
  }
  .winbtns {
    display: flex;
    align-items: center;
    flex: 1;
    font-weight: 700;
    font-size: 10px;
  }
  .winbtns span {
    width: 25px;
    display: flex;
    justify-content: center;
  }

  /* tabs */
  .tabrow {
    height: var(--tabh);
    display: flex;
    align-items: center;
    flex: none;
    border-bottom: 1px solid #d4d4d4;
    font-size: 9.9px;
    box-sizing: border-box;
    color: #666;
  }
  .filetab {
    width: 52px;
    height: var(--fileh);
    background: #217346;
    color: #d5e8dd;
    text-align: center;
    line-height: var(--fileh);
    margin-right: 4px;
    flex: none;
  }
  .w2 .filetab {
    width: 49px;
    margin-left: 1px;
    margin-right: 6px;
  }
  .hometab {
    width: 53px;
    height: 100%;
    box-sizing: border-box;
    border: 1px solid #d4d4d4;
    border-bottom: 0;
    margin-bottom: -1px;
    background: #fff;
    color: #217346;
    text-align: center;
    line-height: var(--tabh);
    flex: none;
  }
  .tab {
    text-align: center;
    flex: none;
    white-space: nowrap;
  }
  .signin {
    margin-left: auto;
    padding-right: 2px;
    white-space: nowrap;
  }

  /* ribbon */
  .ribbon {
    height: var(--rib);
    display: flex;
    flex: none;
    box-sizing: border-box;
    border-bottom: 1px solid #d6d6d6;
  }
  .group {
    display: flex;
    flex-direction: column;
    flex: none;
    box-sizing: border-box;
    border-right: 1px solid #e3e3e3;
    margin: 1px 0;
  }
  .gbody {
    height: var(--bodyh);
    display: flex;
    flex: none;
    box-sizing: border-box;
  }
  .rows {
    flex-direction: column;
    padding-top: 7px;
    gap: var(--rowgap);
  }
  .pad4 {
    padding-left: 4px;
  }
  .pad2 {
    padding-left: 2px;
  }
  .line {
    display: flex;
    align-items: center;
    height: var(--rowh);
  }
  .glabel {
    height: var(--labh);
    display: flex;
    align-items: center;
    color: #666;
    font-size: 9.2px;
  }
  .glabel span:first-child {
    flex: 1;
    text-align: center;
  }
  .launch {
    width: 14px;
    flex: none;
  }
  .slot {
    height: 100%;
    display: flex;
    align-items: center;
    justify-content: center;
    flex: none;
    position: relative;
  }
  .slot.on {
    background: #9fd5b7;
  }
  .dim {
    opacity: 0.42;
  }
  .caret {
    display: inline-block;
    width: 0;
    height: 0;
    border: 2.5px solid transparent;
    border-top: 3px solid #7a7a7a;
    border-bottom: 0;
    vertical-align: middle;
  }
  .caret.sp {
    margin-left: 3px;
  }
  .vsep {
    width: 1px;
    height: 100%;
    background: #e0e0e0;
  }
  .lft {
    width: 100%;
    text-align: left;
    white-space: nowrap;
  }
  .bold {
    font-weight: 700;
    font-size: 10px;
    color: #444;
  }
  .ital {
    font-style: italic;
  }
  .und {
    text-decoration: underline;
  }
  .pct {
    font-size: 11px;
  }
  .tiny {
    font-size: 6.5px;
  }
  .select {
    height: 100%;
    box-sizing: border-box;
    border: 1px solid #ababab;
    background: #fff;
    display: flex;
    align-items: center;
    justify-content: space-between;
    padding: 0 4px 0 2px;
    color: #444;
    font-size: 9px;
    flex: none;
  }
  .fname {
    width: 98px;
  }
  .fsize {
    width: 38px;
    margin-left: -1px;
  }
  .fnum {
    width: 115px;
  }
  .fgrow,
  .fshrink {
    font-size: 11px;
    color: #555;
    width: 20px;
  }
  .fshrink {
    font-size: 9.5px;
    width: 18px;
  }
  sup {
    font-size: 6px;
    line-height: 0;
  }
  .big {
    display: flex;
    flex-direction: column;
    align-items: center;
    flex: none;
    padding-top: 4px;
    box-sizing: border-box;
  }
  .bigic {
    height: var(--iconh);
    margin-bottom: var(--icgap);
    overflow: hidden;
    display: flex;
    align-items: flex-start;
    flex: none;
  }
  .bigic .ic {
    height: var(--iconh);
  }
  .bl {
    height: var(--lh);
    line-height: var(--lh);
    white-space: nowrap;
  }
  .paste {
    width: 46px;
    margin-left: 2px;
  }
  .stack {
    display: flex;
    flex-direction: column;
    gap: var(--stackgap);
    padding-top: var(--stacktop);
    height: max-content;
  }
  .s16 {
    width: 16px;
    height: 12px;
  }
  .caret.out {
    position: absolute;
    left: 20px;
  }
  .mod {
    width: 87px;
    padding-top: 1px;
    flex: none;
    box-sizing: border-box;
    padding-left: 7px;
  }
  .modrow {
    height: var(--modh);
    display: flex;
    align-items: center;
    gap: 3px;
  }
  .modrow .caret {
    margin-left: 1px;
  }
  .caret.far {
    margin-left: 9px;
  }
  .collapse {
    flex: 1;
    display: flex;
    align-items: flex-end;
    justify-content: center;
    padding-bottom: 3px;
    padding-right: 2px;
  }

  /* formula bar */
  .fbar {
    display: flex;
    height: var(--fh);
    margin-top: 7px;
    padding-left: 4px;
    flex: none;
  }
  .w2 .fbar {
    box-shadow: inset 1px 0 0 #5a7a68;
  }
  .namebox {
    width: 90px;
    height: calc(var(--rowh) + 2px);
    box-sizing: border-box;
    border: 1px solid #d8d8d8;
    display: flex;
    align-items: center;
    justify-content: space-between;
    padding: 0 6px;
    color: #555;
    font-size: 9.5px;
  }
  .dots {
    width: 27px;
    height: calc(var(--rowh) + 2px);
    text-align: center;
    color: #bbb;
    line-height: calc(var(--rowh) + 2px);
  }
  .fxbox {
    width: 95px;
    height: calc(var(--rowh) + 2px);
    box-sizing: border-box;
    border: 1px solid #d8d8d8;
    display: flex;
    align-items: center;
    gap: 10px;
    padding-left: 8px;
  }
  .fxbox em {
    font-family: 'Liberation Serif', serif;
    font-size: 14px;
    color: #bbb;
    margin-left: 1px;
  }
  .input {
    width: 976px;
    margin-left: 4px;
    box-sizing: border-box;
    border: 1px solid #d8d8d8;
    display: flex;
    align-items: flex-start;
    justify-content: space-between;
    padding: 3px 5px 0 10px;
    font-size: 9.7px;
    white-space: pre;
  }
  .input .ic {
    margin-top: 7px;
  }

  /* sheet 1 */
  .sheetwrap {
    display: flex;
    margin-top: 8px;
    flex: 1;
    min-height: 0;
    overflow: hidden;
  }
  .s1 {
    display: grid;
    grid-template-rows: 8.5px 25px 29px 15px 11px 19px 13px 12px 20px 34.5px 26px 25.5px 26px;
    flex: none;
  }
  .corner {
    background: #fff;
    border-bottom: 1px solid #d8d8d8;
  }
  .ch {
    font-size: 7.5px;
    line-height: 8px;
    text-align: center;
    color: #666;
    border-bottom: 1px solid #d8d8d8;
    overflow: hidden;
    box-shadow: inset -1px 0 0 #eee;
  }
  .ch.sel {
    background: #d9d9d9;
    border-bottom: 1px solid #217346;
    color: #217346;
    font-weight: 700;
  }
  .rh {
    grid-column: 1;
    font-size: 6.5px;
    color: #777;
    text-align: center;
    display: flex;
    justify-content: center;
    align-items: flex-end;
    padding-bottom: 2px;
    box-sizing: border-box;
    box-shadow: inset -1px 0 0 #ddd;
  }
  .big1 {
    grid-column: 2 / span 3;
    font-size: 20.4px;
    line-height: 24px;
    color: #222;
    padding-left: 4px;
    align-self: end;
    white-space: nowrap;
  }
  .a1 {
    grid-row: 2;
    margin-bottom: -2px;
  }
  .a2 {
    grid-row: 3;
    margin-bottom: -1px;
  }
  .a3 {
    grid-row: 4;
    grid-column: 2 / span 3;
  }
  .a4 {
    grid-row: 5;
    grid-column: 2 / span 3;
  }
  .a6 {
    grid-row: 7;
    grid-column: 2 / span 3;
  }
  .nq {
    grid-row: 6;
    grid-column: 2 / span 3;
    font-size: 13px;
    line-height: 16px;
    color: #333;
    padding-left: 3px;
    align-self: end;
    white-space: nowrap;
  }
  .canvas {
    grid-row: 2 / span 6;
    grid-column: 5 / -1;
    position: relative;
    box-shadow: inset 1px 0 0 #555;
  }
  .note {
    position: absolute;
    left: 0;
    top: 2px;
    width: 70px;
    height: 39px;
    box-sizing: border-box;
    background: #ffffd0;
    border-right: 2px solid #333;
    border-bottom: 2px solid #333;
    font-size: 5.5px;
    font-weight: 700;
    color: #222;
    line-height: 7.5px;
    padding-top: 1px;
    overflow: hidden;
    white-space: nowrap;
  }
  .note p {
    margin: 0;
  }
  .banner {
    position: absolute;
    left: 91.5px;
    top: 12px;
    width: 275px;
    height: 60px;
    background: #ff9900;
    color: #fff;
    overflow: hidden;
  }
  .banner span {
    display: block;
    font-family: Roboto, sans-serif;
    font-weight: 700;
    font-size: 38px;
    line-height: 60px;
    white-space: nowrap;
    transform-origin: 0 50%;
    transform: translateX(13px) scaleX(0.77);
  }
  .r7 {
    grid-row: 8;
  }
  .rate {
    grid-row: 8;
    font-size: 9px;
    line-height: 12px;
    text-align: center;
    color: #e04a4a;
  }
  .rate.free {
    box-shadow: inset -1px 0 0 #555;
  }
  .r8 {
    grid-row: 9;
  }
  .blank8 {
    grid-row: 9;
    grid-column: 2 / span 3;
    border-bottom: 1px solid #555;
    box-shadow: inset -1px 0 0 #555;
  }
  .asig {
    grid-row: 9;
    grid-column: 5 / span 4;
    background: #3366ff;
    color: #15284f;
    font-size: 15px;
    line-height: 23px;
    text-align: center;
  }
  .dedu {
    grid-row: 9;
    grid-column: 9 / -1;
    background: #808080;
    color: #1f1f1f;
    font-size: 15px;
    line-height: 23px;
    text-align: center;
    padding-left: 40px;
  }
  .r9 {
    padding-bottom: 1px;
  }
  .hc {
    position: relative;
    box-sizing: border-box;
    border-right: 1px solid #555;
    border-bottom: 1px solid #bbb;
    border-top: 1px solid #555;
    display: flex;
    flex-direction: column;
    justify-content: flex-end;
    align-items: center;
    text-align: center;
    font-size: 9px;
    line-height: 11.5px;
    color: #555;
    overflow: hidden;
  }
  .hc:last-child {
    border-right: 0;
  }
  .hc.wide {
    border-right: 1px solid #555;
    align-items: flex-start;
    padding-left: 9px;
    white-space: nowrap;
  }
  .hc.orange,
  .bc.orange {
    background: #ff9900;
    color: #6b4a10;
  }
  .hc .pre {
    white-space: pre;
  }
  .cutoff {
    align-self: flex-start;
    padding-left: 2px;
  }
  .fbtn {
    position: absolute;
    right: 2px;
    bottom: 1px;
    width: 12px;
    height: 11px;
    background: #eee;
    border: 1px solid #ccc;
    box-sizing: border-box;
    display: flex;
    align-items: center;
    justify-content: center;
  }
  .rn {
    font-size: 7px;
    padding-bottom: 3px;
  }
  .rn.active {
    background: #d9d9d9;
    color: #217346;
    font-weight: 700;
    box-shadow: inset -2px 0 0 #217346;
  }
  .bc {
    box-sizing: border-box;
    border-right: 1px solid #555;
    border-bottom: 2px solid #8a8a8a;
    display: flex;
    align-items: flex-end;
    justify-content: center;
    font-size: 9px;
    line-height: 11px;
    color: #555;
    white-space: pre;
    position: relative;
  }
  .bc .pre {
    margin-bottom: -1px;
  }
  .bc.black {
    border-bottom: 1px solid #111;
  }
  .bc.left {
    justify-content: flex-start;
    padding-left: 2px;
  }
  .bc.link {
    color: #3a3ad0;
  }
  .bc.link .pre {
    text-decoration: underline;
  }
  .bc.picked {
    outline: 2px solid #217346;
    outline-offset: -1px;
    z-index: 2;
  }
  .bc.picked::after {
    content: '';
    position: absolute;
    right: -3px;
    bottom: -3px;
    width: 4px;
    height: 4px;
    background: #217346;
  }

  /* scrollbars */
  .vscroll {
    width: 14px;
    margin-left: auto;
    margin-right: 3px;
    display: flex;
    flex-direction: column;
    background: #f7f7f7;
    border-left: 1px solid #e3e3e3;
    border-right: 1px solid #e3e3e3;
    box-sizing: border-box;
  }
  .vscroll.one {
    flex: none;
    height: 263px;
  }
  .varrow {
    height: 11px;
    display: flex;
    align-items: center;
    justify-content: center;
    flex: none;
    border-bottom: 1px solid #ddd;
  }
  .varrow.flip {
    transform: scaleY(-1);
    border-bottom: 0;
    border-top: 1px solid #ddd;
  }
  .vthumb {
    height: 67px;
    background: #fff;
    border: 1px solid #ababab;
    box-sizing: border-box;
    margin-top: 1px;
  }
  .vthumb.long {
    flex: 1;
  }

  /* sheet 2 */
  .two {
    margin-top: 8px;
    height: 282px;
    flex: none;
  }
  .col2 {
    width: 1180px;
    flex: none;
    overflow: hidden;
  }
  .headrow {
    display: flex;
    height: 11px;
    border-bottom: 1px solid #dcdcdc;
    box-sizing: content-box;
    overflow: hidden;
  }
  .corner2 {
    width: 23px;
    flex: none;
  }
  .ch2 {
    flex: none;
    font-size: 9.5px;
    line-height: 11px;
    display: flex;
    justify-content: center;
    white-space: nowrap;
    color: #777;
  }
  .ch2.sel {
    background: #dcdcdc;
    color: #217346;
    font-weight: 700;
    font-size: 10px;
    box-shadow: inset 0 -1px 0 #217346;
  }
  .s2 {
    display: grid;
    grid-template-columns: 22.5px 65.5px 96px 211px 101px 53px 66px 39px 40px 65.5px 26.5px 79px;
    grid-template-rows: 29.6px 14.4px 12.7px 15.6px 14.7px 14px 15px repeat(11, 14.4px);
    font-family: 'Liberation Serif', serif;
    color: #333;
  }
  .rh2 {
    grid-column: 1;
    font-size: 9.5px;
    display: flex;
    align-items: flex-end;
    justify-content: center;
    line-height: 14px;
    color: #666;
    box-shadow: inset -1px 0 0 #ddd;
    letter-spacing: 0.5px;
  }
  .rh2.active {
    background: #dcdcdc;
    color: #217346;
    font-weight: 700;
    box-shadow: inset -1px 0 0 #217346;
  }
  .cell {
    display: flex;
    align-items: center;
    justify-content: center;
    box-sizing: border-box;
    white-space: nowrap;
    overflow: hidden;
  }
  .hd {
    background: #868686;
    color: #161616;
    font-size: 7px;
    font-weight: 700;
    letter-spacing: 0.5px;
    box-shadow: inset 0 -1px 0 #444;
  }
  .hd.end {
    align-items: flex-end;
    padding-bottom: 4px;
  }
  .hd.tl {
    box-shadow: inset 0 1px 0 #444, inset 0 -1px 0 #444;
  }
  .ll {
    box-shadow: inset 1px 0 0 #444;
  }
  .hd.ll {
    box-shadow: inset 1px 0 0 #444, inset 0 -1px 0 #444;
  }
  .val {
    font-size: 9px;
    letter-spacing: 0.85px;
    color: #444;
    box-shadow: inset 0 -1px 0 #444;
  }
  .val.ll {
    box-shadow: inset 1px 0 0 #444, inset 0 -1px 0 #444;
  }
  .title {
    font-size: 12px;
    font-weight: 700;
    color: #222;
    letter-spacing: 0.8px;
    box-shadow: inset 1px 0 0 #444, inset 0 -1px 0 #444;
    padding-bottom: 3px;
  }
  .ln {
    box-shadow: inset 1px 0 0 #444, inset 0 -1px 0 #444, inset -1px 0 0 #444;
  }
  .one {
    font-size: 6.5px;
    font-weight: 700;
    align-items: flex-end;
    padding-bottom: 3px;
  }
  .name {
    font-size: 9.5px;
    letter-spacing: 0.6px;
    white-space: pre;
    box-shadow: inset 0 -1px 0 #444;
  }
  .quote {
    font-size: 9.5px;
    font-style: italic;
    font-weight: 700;
    color: #555;
    letter-spacing: 0.5px;
    box-shadow: inset 1px 0 0 #444, inset 0 -1px 0 #444, inset -1px 0 0 #444;
  }
  .picked {
    outline: 2px solid #217346;
    outline-offset: -2px;
  }
  .vl {
    box-shadow: inset -1px 0 0 #444;
  }
  .v8 {
    font-size: 9px;
    letter-spacing: 0.6px;
  }
  .t8 {
    justify-content: flex-start;
    padding-left: 3px;
    font-size: 9.5px;
    letter-spacing: 0.8px;
    color: #333;
  }

  /* bottom */
  .sheettabs {
    height: 16px;
    display: flex;
    align-items: center;
    flex: none;
    background: #f4f4f4;
    border-top: 1px solid #d8d8d8;
    box-sizing: border-box;
    font-size: 9.5px;
    letter-spacing: 0.95px;
  }
  .nav {
    width: 89px;
    height: 100%;
    flex: none;
    display: flex;
    align-items: center;
    gap: 22px;
    padding-left: 24px;
    box-sizing: border-box;
    box-shadow: inset -1px 0 0 #bbb;
  }
  .tri {
    display: inline-block;
    width: 0;
    height: 0;
    border: 2.5px solid transparent;
  }
  .tri.l {
    border-right: 3px solid #555;
    border-left: 0;
  }
  .tri.r {
    border-left: 3px solid #555;
    border-right: 0;
  }
  .stab {
    height: 13px;
    line-height: 13px;
    text-align: center;
    flex: none;
    box-sizing: border-box;
    white-space: pre;
  }
  .stab.plain {
    color: #666;
  }
  .stab.navy {
    background: #1f3864;
    color: #d0d8e6;
  }
  .stab.active {
    background: linear-gradient(#fff 70%, #cfe3d8);
    color: #217346;
    font-weight: 700;
    letter-spacing: 0.4px;
    height: 15px;
    line-height: 14px;
    border-left: 1px solid #d8d8d8;
    border-right: 1px solid #d8d8d8;
  }
  .stab.red {
    background: #a02c2c;
    color: #f0d0d0;
    letter-spacing: 0.6px;
  }
  .more {
    width: 18px;
    text-align: center;
    font-weight: 700;
    letter-spacing: 0;
    margin-left: -2px;
  }
  .plus {
    width: 13px;
    height: 13px;
    line-height: 11px;
    margin-left: 9px;
    box-sizing: border-box;
    border: 1px solid #888;
    border-radius: 50%;
    text-align: center;
    color: #555;
    font-size: 11px;
    letter-spacing: 0;
    flex: none;
  }
  .vdots {
    width: 12px;
    margin-left: 12px;
    color: #bbb;
    letter-spacing: 0;
    flex: none;
  }
  .hscroll {
    display: flex;
    align-items: center;
    width: 446px;
    height: 10px;
    margin-left: 3px;
    flex: none;
  }
  .harrow {
    width: 12px;
    height: 100%;
    box-sizing: border-box;
    border: 1px solid #bbb;
    background: #fff;
    display: flex;
    align-items: center;
    justify-content: center;
    flex: none;
  }
  .htrack {
    flex: 1;
    height: 100%;
    margin: 0 7px 0 1px;
    box-sizing: border-box;
    border: 1px solid #bbb;
    background: #fff;
  }
  .status {
    height: 13.5px;
    flex: none;
    background: #217346;
    color: #d9e9e0;
    display: flex;
    align-items: center;
    font-size: 8px;
  }
  .listo {
    margin-left: 6px;
    width: 934px;
    flex: none;
  }
  .views {
    display: flex;
    height: 100%;
  }
  .view {
    width: 33.5px;
    height: 100%;
    display: flex;
    align-items: center;
    justify-content: center;
  }
  .view.cur {
    background: #1b5e39;
  }
  .zoomctl {
    display: flex;
    align-items: center;
    gap: 3px;
    margin-left: 5px;
    font-size: 10px;
    line-height: 1;
  }
  .ztrack {
    width: 88px;
    height: 1px;
    background: #b8d3c4;
    position: relative;
  }
  .ztrack i {
    position: absolute;
    left: 42px;
    top: -4px;
    width: 3px;
    height: 9px;
    background: #e8f2ec;
  }
  .pct100 {
    margin-left: 14px;
    font-size: 8.5px;
    white-space: nowrap;
  }
  .taskbar {
    flex: 1;
    display: flex;
    align-items: center;
    background: linear-gradient(90deg, #a7cdec 0, #b4d7f4 30%, #bcdcf9 55%, #a4c8e8 72%, #6f9bc3 92%, #618db6 100%);
    min-height: 0;
  }
  .apps {
    display: flex;
    align-items: center;
    padding-left: 4px;
    height: 100%;
    flex: none;
  }
  .app {
    height: 100%;
    display: flex;
    align-items: center;
    justify-content: center;
    flex: none;
  }
  .app.btn {
    background: linear-gradient(#d6e8f7, #a9cdea);
    box-shadow: inset 0 0 0 1px #8fb0cf;
  }
  .tray {
    margin-left: auto;
    display: flex;
    align-items: center;
    height: 100%;
    gap: 8px;
    color: #e2edf6;
    font-size: 8px;
  }
  .lang {
    margin-right: 4px;
  }
  .traycar {
    margin-right: 8px;
    color: #445;
  }
  .clock {
    display: flex;
    flex-direction: column;
    align-items: center;
    width: 52px;
    margin-left: 7px;
    line-height: 11px;
    font-size: 8.5px;
  }
  .desk {
    width: 12px;
    height: 100%;
    margin-left: 3px;
    background: linear-gradient(90deg, #7ea3c6, #a8c5df);
    box-shadow: inset 1px 0 0 #c8dbec;
  }
</style>
